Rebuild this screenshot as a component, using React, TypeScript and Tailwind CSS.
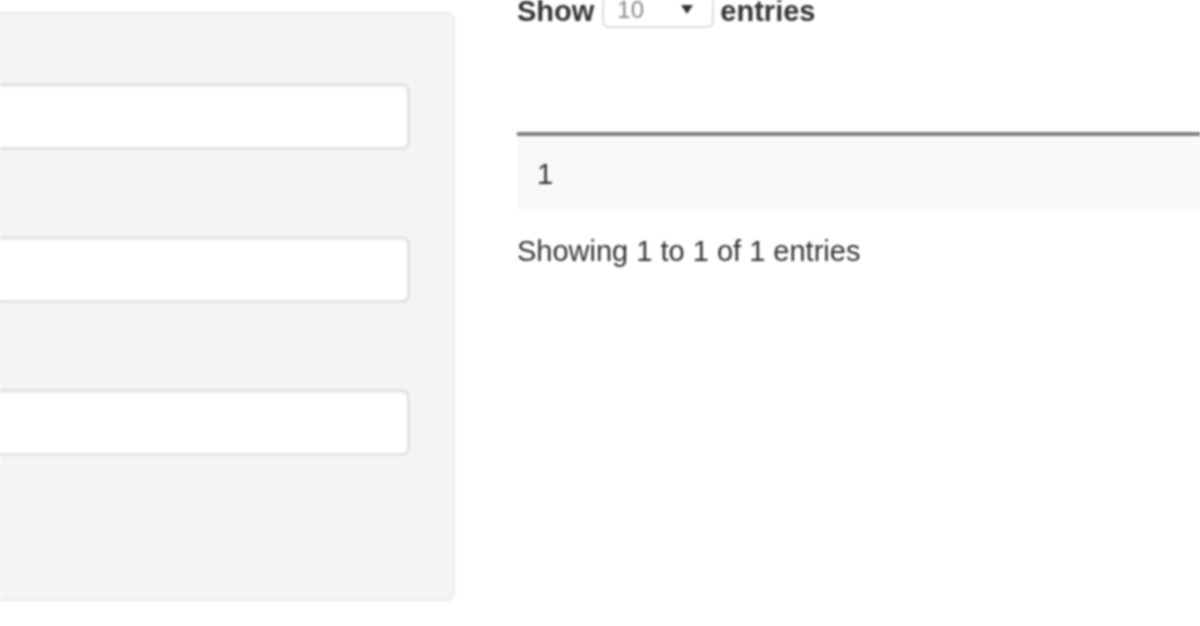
export default function App() {
  const fields = ["first", "second", "third"];

  return (
    <div className="w-[1200px] h-[626px] overflow-hidden bg-white flex items-start font-['Liberation_Sans',Arial,sans-serif] text-[#333] blur-[1.2px]">
      {/* filter well */}
      <div className="ml-[-40px] mt-[12px] h-[589px] w-[495px] shrink-0 bg-[#f4f4f4] border-2 border-[#ebebeb] rounded-[8px] pt-[69px] pr-[43px] flex flex-col gap-[86px]">
        {fields.map((f) => (
          <div
            key={f}
            className="h-[67px] bg-white border-[3px] border-[#e3e3e3] rounded-[8px] shadow-[inset_0_2px_2px_rgba(0,0,0,0.04)]"
          />
        ))}
      </div>

      {/* table */}
      <div className="ml-[62px] flex-1 flex flex-col">
        <div className="mt-[-9px] flex items-start text-[29px] font-bold leading-[40px]">
          <span>Show</span>
          <div className="ml-[8px] h-[37px] w-[112px] border-2 border-[#dcdcdc] rounded-[7px] flex items-center justify-between pl-[13px] pr-[18px]">
            <span className="text-[24px] font-normal text-[#888] leading-none">10</span>
            <svg width="14" height="11" viewBox="0 0 14 11">
              <path d="M1 1 L13 1 L7 10 Z" fill="#333" />
            </svg>
          </div>
          <span className="ml-[6px]">entries</span>
        </div>

        <div className="mt-[101px] border-t-[4px] border-[#808080]" />
        <div className="h-[73px] bg-[#f9f9f9] flex items-center pl-[20px] pt-[4px] text-[29px]">
          1
        </div>

        <p className="mt-[22px] text-[29px] leading-[40px]">
          Showing 1 to 1 of 1 entries
        </p>
      </div>
    </div>
  );
}
